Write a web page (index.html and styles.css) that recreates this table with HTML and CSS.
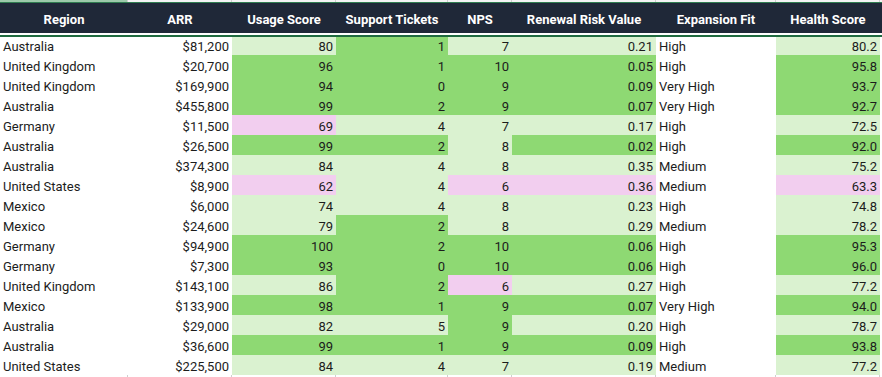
FILE: index.html
```html
<!DOCTYPE html>
<html lang="en">
<head>
<meta charset="utf-8">
<title>Account Health</title>
<link rel="stylesheet" href="styles.css">
</head>
<body>
<div class="sheet">
  <div class="strip strip-top">
    <span class="sc sc-sel"></span><span class="sc"></span><span class="sc"></span><span class="sc"></span><span class="sc"></span><span class="sc"></span><span class="sc"></span><span class="sc"></span>
  </div>
  <div class="head">
    <div class="h">Region</div>
    <div class="h">ARR</div>
    <div class="h">Usage Score</div>
    <div class="h">Support Tickets</div>
    <div class="h">NPS</div>
    <div class="h">Renewal Risk Value</div>
    <div class="h">Expansion Fit</div>
    <div class="h">Health Score</div>
  </div>
  <div class="rule"></div>
  <div class="body">
    <div class="row"><div class="c t">Australia</div><div class="c n">$81,200</div><div class="c n lt">80</div><div class="c n gr">1</div><div class="c n lt">7</div><div class="c n lt">0.21</div><div class="c t">High</div><div class="c n lt">80.2</div></div>
    <div class="row"><div class="c t">United Kingdom</div><div class="c n">$20,700</div><div class="c n gr">96</div><div class="c n gr">1</div><div class="c n gr">10</div><div class="c n gr">0.05</div><div class="c t">High</div><div class="c n gr">95.8</div></div>
    <div class="row"><div class="c t">United Kingdom</div><div class="c n">$169,900</div><div class="c n gr">94</div><div class="c n gr">0</div><div class="c n gr">9</div><div class="c n gr">0.09</div><div class="c t">Very High</div><div class="c n gr">93.7</div></div>
    <div class="row"><div class="c t">Australia</div><div class="c n">$455,800</div><div class="c n gr">99</div><div class="c n gr">2</div><div class="c n gr">9</div><div class="c n gr">0.07</div><div class="c t">Very High</div><div class="c n gr">92.7</div></div>
    <div class="row"><div class="c t">Germany</div><div class="c n">$11,500</div><div class="c n pk">69</div><div class="c n lt">4</div><div class="c n lt">7</div><div class="c n lt">0.17</div><div class="c t">High</div><div class="c n lt">72.5</div></div>
    <div class="row"><div class="c t">Australia</div><div class="c n">$26,500</div><div class="c n gr">99</div><div class="c n gr">2</div><div class="c n lt">8</div><div class="c n gr">0.02</div><div class="c t">High</div><div class="c n gr">92.0</div></div>
    <div class="row"><div class="c t">Australia</div><div class="c n">$374,300</div><div class="c n lt">84</div><div class="c n lt">4</div><div class="c n lt">8</div><div class="c n lt">0.35</div><div class="c t">Medium</div><div class="c n lt">75.2</div></div>
    <div class="row"><div class="c t">United States</div><div class="c n">$8,900</div><div class="c n pk">62</div><div class="c n lt">4</div><div class="c n pk">6</div><div class="c n pk">0.36</div><div class="c t">Medium</div><div class="c n pk">63.3</div></div>
    <div class="row"><div class="c t">Mexico</div><div class="c n">$6,000</div><div class="c n lt">74</div><div class="c n lt">4</div><div class="c n lt">8</div><div class="c n lt">0.23</div><div class="c t">High</div><div class="c n lt">74.8</div></div>
    <div class="row"><div class="c t">Mexico</div><div class="c n">$24,600</div><div class="c n lt">79</div><div class="c n gr">2</div><div class="c n lt">8</div><div class="c n lt">0.29</div><div class="c t">Medium</div><div class="c n lt">78.2</div></div>
    <div class="row"><div class="c t">Germany</div><div class="c n">$94,900</div><div class="c n gr">100</div><div class="c n gr">2</div><div class="c n gr">10</div><div class="c n gr">0.06</div><div class="c t">High</div><div class="c n gr">95.3</div></div>
    <div class="row"><div class="c t">Germany</div><div class="c n">$7,300</div><div class="c n gr">93</div><div class="c n gr">0</div><div class="c n gr">10</div><div class="c n gr">0.06</div><div class="c t">High</div><div class="c n gr">96.0</div></div>
    <div class="row"><div class="c t">United Kingdom</div><div class="c n">$143,100</div><div class="c n lt">86</div><div class="c n gr">2</div><div class="c n pk">6</div><div class="c n lt">0.27</div><div class="c t">High</div><div class="c n lt">77.2</div></div>
    <div class="row"><div class="c t">Mexico</div><div class="c n">$133,900</div><div class="c n gr">98</div><div class="c n gr">1</div><div class="c n gr">9</div><div class="c n gr">0.07</div><div class="c t">Very High</div><div class="c n gr">94.0</div></div>
    <div class="row"><div class="c t">Australia</div><div class="c n">$29,000</div><div class="c n lt">82</div><div class="c n lt">5</div><div class="c n gr">9</div><div class="c n lt">0.20</div><div class="c t">High</div><div class="c n lt">78.7</div></div>
    <div class="row"><div class="c t">Australia</div><div class="c n">$36,600</div><div class="c n gr">99</div><div class="c n gr">1</div><div class="c n gr">9</div><div class="c n gr">0.09</div><div class="c t">High</div><div class="c n gr">93.8</div></div>
    <div class="row"><div class="c t">United States</div><div class="c n">$225,500</div><div class="c n lt">84</div><div class="c n lt">4</div><div class="c n lt">7</div><div class="c n lt">0.19</div><div class="c t">Medium</div><div class="c n lt">77.2</div></div>
  </div>
  <div class="strip strip-bottom">
    <span class="sc"></span><span class="sc"></span><span class="sc"></span><span class="sc"></span><span class="sc"></span><span class="sc"></span><span class="sc"></span><span class="sc"></span>
  </div>
</div>
</body>
</html>
```
FILE: styles.css
```css
html, body {
  margin: 0;
  padding: 0;
  background: #ffffff;
}

.sheet {
  width: 882px;
  height: 377px;
  overflow: hidden;
  font-family: Roboto, "Liberation Sans", Arial, sans-serif;
  font-size: 13px;
  color: #1c1c1c;
}

.strip,
.head,
.row {
  display: grid;
  grid-template-columns: 128px 104px 104px 112px 64px 144px 120px 104px 2px;
}

.strip-top {
  height: 2px;
  background: #f3f3f3;
  border-bottom: 1px solid #2f7d50;
}

.sc {
  border-right: 1px solid #cfcfcf;
}

.sc-sel {
  background: #9cc9aa;
}

.strip-bottom {
  height: 2px;
  background: #ffffff;
}

.head {
  height: 30px;
  background: #1f2838;
  color: #ffffff;
  font-weight: 700;
}

.h {
  display: flex;
  align-items: flex-end;
  justify-content: center;
  padding-bottom: 5px;
  line-height: 16px;
  white-space: nowrap;
}

.rule {
  height: 2px;
  background: #ffffff;
  border-bottom: 2px solid #1f6b40;
}

.row {
  height: 20px;
}

.row:first-child {
  height: 18px;
}

.c {
  display: flex;
  align-items: flex-end;
  padding: 0 3px;
  line-height: 16px;
  white-space: nowrap;
  overflow: hidden;
}

.t {
  justify-content: flex-start;
}

.n {
  justify-content: flex-end;
}

.lt {
  background: #daf2d0;
}

.gr {
  background: #8ed973;
}

.pk {
  background: #f2ceef;
}
```
